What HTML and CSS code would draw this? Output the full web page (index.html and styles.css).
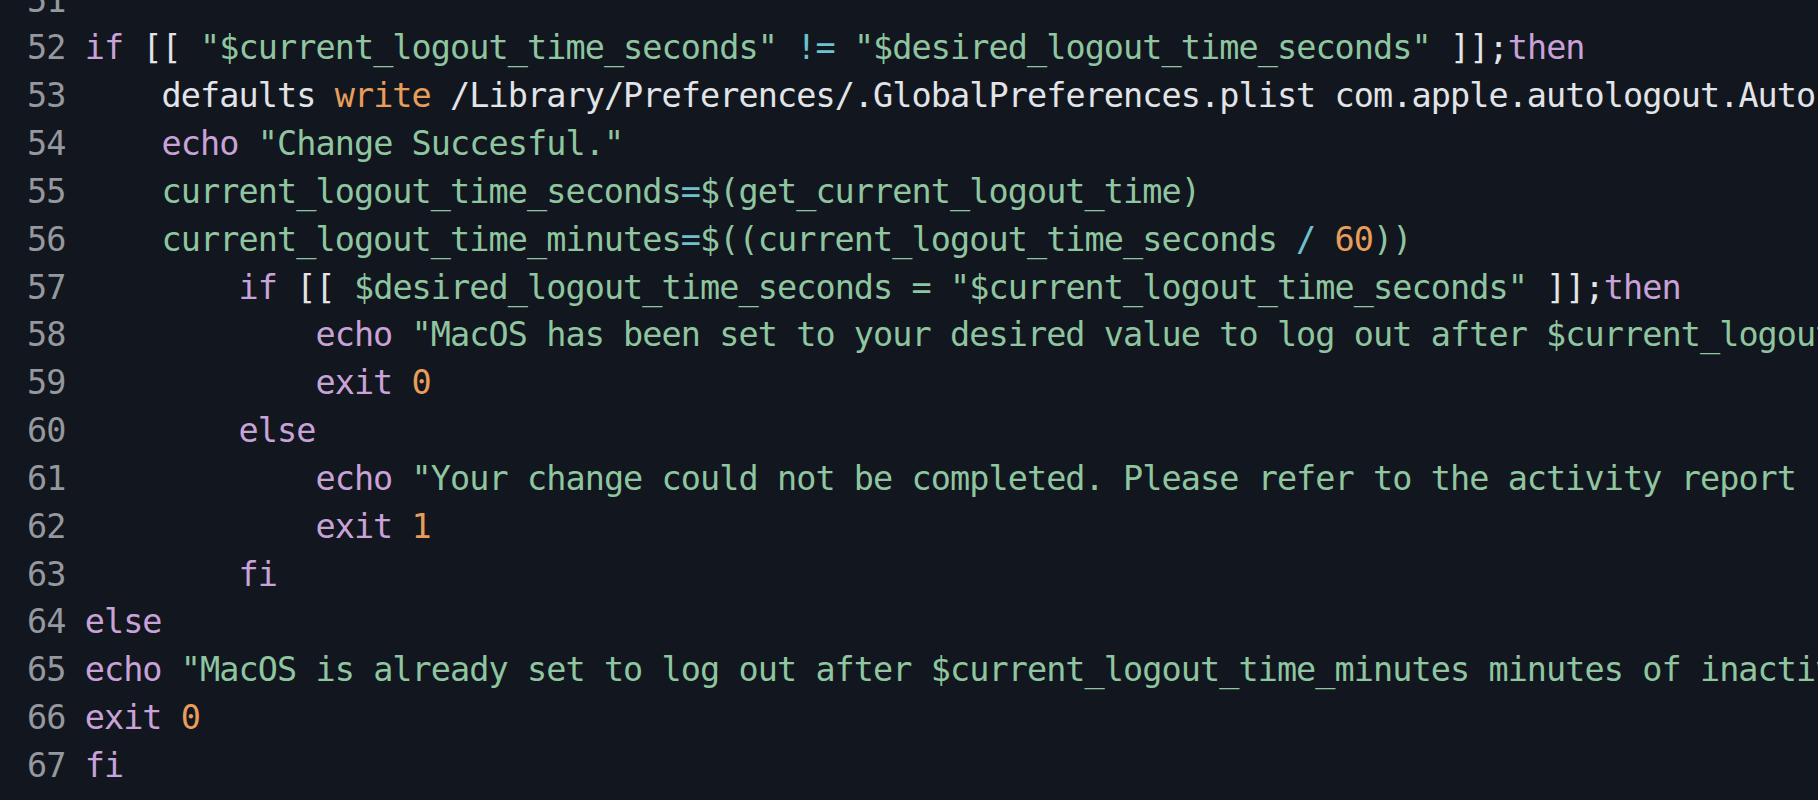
FILE: index.html
```html
<!DOCTYPE html>
<html>
<head>
<meta charset="utf-8">
<link rel="stylesheet" href="styles.css">
</head>
<body>
<div class="editor">
<div class="line"><span class="ln">51</span><span class="code"></span></div>
<div class="line"><span class="ln">52</span><span class="code"><span class="kw">if</span> [[ <span class="str">"$current_logout_time_seconds"</span> <span class="op">!=</span> <span class="str">"$desired_logout_time_seconds"</span> ]];<span class="kw">then</span></span></div>
<div class="line"><span class="ln">53</span><span class="code">    defaults <span class="num">write</span> /Library/Preferences/.GlobalPreferences.plist com.apple.autologout.AutoLogOutDelay -int $desired_logout_time_seconds</span></div>
<div class="line"><span class="ln">54</span><span class="code">    <span class="kw">echo</span> <span class="str">"Change Succesful."</span></span></div>
<div class="line"><span class="ln">55</span><span class="code"><span class="str">    current_logout_time_seconds</span><span class="op">=</span><span class="str">$(get_current_logout_time)</span></span></div>
<div class="line"><span class="ln">56</span><span class="code"><span class="str">    current_logout_time_minutes</span><span class="op">=</span><span class="str">$((current_logout_time_seconds </span><span class="op">/</span> <span class="num">60</span><span class="str">))</span></span></div>
<div class="line"><span class="ln">57</span><span class="code">        <span class="kw">if</span> [[ <span class="str">$desired_logout_time_seconds = "$current_logout_time_seconds"</span> ]];<span class="kw">then</span></span></div>
<div class="line"><span class="ln">58</span><span class="code">            <span class="kw">echo</span> <span class="str">"MacOS has been set to your desired value to log out after $current_logout_time_minutes minutes of inactivity."</span></span></div>
<div class="line"><span class="ln">59</span><span class="code">            <span class="kw">exit</span> <span class="num">0</span></span></div>
<div class="line"><span class="ln">60</span><span class="code">        <span class="kw">else</span></span></div>
<div class="line"><span class="ln">61</span><span class="code">            <span class="kw">echo</span> <span class="str">"Your change could not be completed. Please refer to the activity report for more information."</span></span></div>
<div class="line"><span class="ln">62</span><span class="code">            <span class="kw">exit</span> <span class="num">1</span></span></div>
<div class="line"><span class="ln">63</span><span class="code">        <span class="kw">fi</span></span></div>
<div class="line"><span class="ln">64</span><span class="code"><span class="kw">else</span></span></div>
<div class="line"><span class="ln">65</span><span class="code"><span class="kw">echo</span> <span class="str">"MacOS is already set to log out after $current_logout_time_minutes minutes of inactivity."</span></span></div>
<div class="line"><span class="ln">66</span><span class="code"><span class="kw">exit</span> <span class="num">0</span></span></div>
<div class="line"><span class="ln">67</span><span class="code"><span class="kw">fi</span></span></div>
</div>
</body>
</html>
```
FILE: styles.css
```css
html, body {
  margin: 0;
  padding: 0;
  background: #12171f;
  overflow: hidden;
}
.editor {
  margin-top: -23.5px;
  padding-left: 27px;
  font-family: "DejaVu Sans Mono", monospace;
  font-size: 33.5px;
  letter-spacing: -0.94px;
  line-height: 47.85px;
  color: #e2e4e8;
  width: 1818px;
  height: 823px;
  overflow: hidden;
}
.line {
  display: flex;
  height: 47.85px;
  white-space: pre;
}
.ln {
  width: 57.7px;
  color: #95989e;
  flex: none;
}
.code {
  flex: none;
}
.kw { color: #c8a2d8; }
.str { color: #8fc6a0; }
.num { color: #e89d5a; }
.op { color: #6cc3cf; }
```
